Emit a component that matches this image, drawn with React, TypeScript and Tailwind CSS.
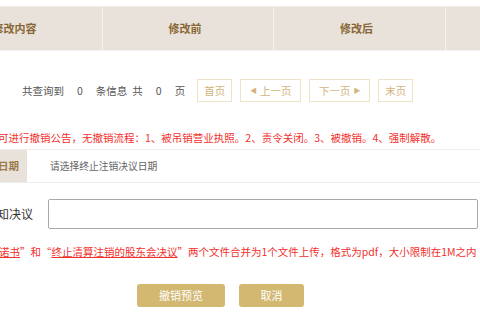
const font = "font-['Noto_Sans_CJK_SC','Noto_Sans',sans-serif]";

function PageButton({ children, width }: { children: React.ReactNode; width: string }) {
  return (
    <div
      className={`flex h-[23px] ${width} items-center justify-center gap-[3px] border border-[#f0e2c9] text-[10.5px] text-[#d4b47c]`}
    >
      {children}
    </div>
  );
}

export default function App() {
  return (
    <div className={`relative h-[320px] w-[480px] overflow-hidden bg-white ${font}`}>
      {/* result table header */}
      <div className="mt-[6px] -ml-[73px] flex h-[45px] border-t border-[#efebe7] border-b border-b-[#f3f0ed] bg-[#e8e2db] text-[11px] font-bold text-[#8a6634]">
        <div className="flex w-[176px] shrink-0 items-center justify-center border-r border-[#f5f2ef]">
          修改内容
        </div>
        <div className="flex w-[171px] shrink-0 items-center justify-center border-r border-[#f5f2ef] pr-[6px]">
          修改前
        </div>
        <div className="flex w-[172px] shrink-0 items-center justify-center border-r border-[#f5f2ef] pr-[6px]">
          修改后
        </div>
        <div className="flex w-[240px] shrink-0 items-center justify-center">修改时间</div>
      </div>

      {/* pagination */}
      <div className="mt-[28px] flex h-[23px] items-center pl-[22px] text-[10.5px] text-[#555]">
        <span>共查询到</span>
        <span className="px-[13px]">0</span>
        <span>条信息</span>
        <span className="ml-[5px]">共</span>
        <span className="px-[13px]">0</span>
        <span>页</span>
        <div className="ml-[12px] flex gap-[8px]">
          <PageButton width="w-[35px]">首页</PageButton>
          <PageButton width="w-[61px]">
            <span className="text-[7px]">◀</span>
            <span>上一页</span>
          </PageButton>
          <PageButton width="w-[61px]">
            <span>下一页</span>
            <span className="text-[7px]">▶</span>
          </PageButton>
          <PageButton width="w-[35px]">末页</PageButton>
        </div>
      </div>

      {/* notice */}
      <p className="mt-[28px] -ml-[2px] whitespace-nowrap text-[10.5px] leading-[16px] text-[#f2302c]">
        可进行撤销公告，无撤销流程：1、被吊销营业执照。2、责令关闭。3、被撤销。4、强制解散。
      </p>

      {/* date row */}
      <div className="mt-[3px] flex h-[34px] items-stretch border-y border-[#eeeeee]">
        <div className="flex w-[27px] shrink-0 items-center justify-end overflow-hidden whitespace-nowrap bg-[#e8e2db] pr-[8px] text-[10.5px] font-bold text-[#9b7b48]">
          决议日期
        </div>
        <div className="flex items-center pl-[23px] text-[9.75px] text-[#666]">请选择终止注销决议日期</div>
      </div>

      {/* upload row */}
      <div className="mt-[16px] flex h-[30px] items-center">
        <div className="flex w-[33px] shrink-0 justify-end overflow-hidden whitespace-nowrap text-[12px] text-[#333]">
          通知决议
        </div>
        <div className="ml-[15px] mr-[2px] h-[30px] flex-1 rounded-[2px] border border-[#a9a9a9]" />
      </div>

      <p className="mt-[15px] -ml-[22px] whitespace-nowrap text-[10.5px] leading-[16px] text-[#f2302c]">
        “<span className="underline">承诺书</span>”和“
        <span className="underline">终止清算注销的股东会决议</span>
        ”两个文件合并为1个文件上传，格式为pdf，大小限制在1M之内
      </p>

      {/* actions */}
      <div className="mt-[24px] flex gap-[14px] pl-[137px]">
        <button className="h-[23px] w-[88px] rounded-[3px] bg-[#d3b872] text-[11px] text-white">撤销预览</button>
        <button className="h-[23px] w-[65px] rounded-[3px] bg-[#d3b872] text-[11px] text-white">取消</button>
      </div>
    </div>
  );
}
